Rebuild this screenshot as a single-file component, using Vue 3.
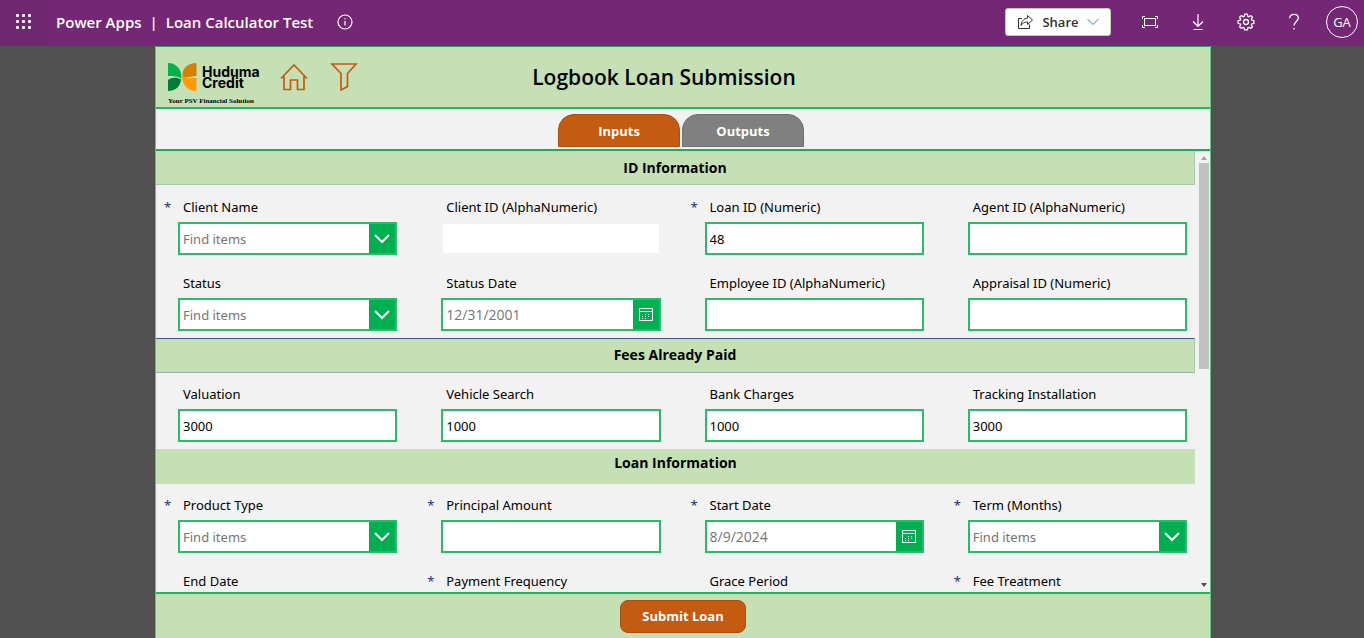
<script setup>
const tabs = [
  { name: 'Inputs', active: true },
  { name: 'Outputs', active: false },
]

const sections = [
  {
    title: 'ID Information',
    variant: 'first',
    fields: [
      { id: 'client-name', label: 'Client Name', type: 'combo', required: true },
      { id: 'client-id', label: 'Client ID (AlphaNumeric)', type: 'view' },
      { id: 'loan-id', label: 'Loan ID (Numeric)', type: 'text', value: '48', required: true },
      { id: 'agent-id', label: 'Agent ID (AlphaNumeric)', type: 'text' },
      { id: 'status', label: 'Status', type: 'combo' },
      { id: 'status-date', label: 'Status Date', type: 'date', value: '12/31/2001' },
      { id: 'employee-id', label: 'Employee ID (AlphaNumeric)', type: 'text' },
      { id: 'appraisal-id', label: 'Appraisal ID (Numeric)', type: 'text' },
    ],
  },
  {
    title: 'Fees Already Paid',
    variant: 'ruled',
    fields: [
      { id: 'valuation', label: 'Valuation', type: 'text', value: '3000' },
      { id: 'vehicle-search', label: 'Vehicle Search', type: 'text', value: '1000' },
      { id: 'bank-charges', label: 'Bank Charges', type: 'text', value: '1000' },
      { id: 'tracking', label: 'Tracking Installation', type: 'text', value: '3000' },
    ],
  },
  {
    title: 'Loan Information',
    variant: 'plain',
    fields: [
      { id: 'product-type', label: 'Product Type', type: 'combo', required: true },
      { id: 'principal', label: 'Principal Amount', type: 'text', required: true },
      { id: 'start-date', label: 'Start Date', type: 'date', value: '8/9/2024', required: true },
      { id: 'term', label: 'Term (Months)', type: 'combo', required: true },
      { id: 'end-date', label: 'End Date', type: 'view' },
      { id: 'frequency', label: 'Payment Frequency', type: 'combo', required: true },
      { id: 'grace', label: 'Grace Period', type: 'text' },
      { id: 'fee-treatment', label: 'Fee Treatment', type: 'combo', required: true },
    ],
  },
]
</script>

<template>
  <div class="shell">
    <header class="topbar">
      <button class="icon-btn waffle" aria-label="App launcher">
        <svg width="16" height="16" viewBox="0 0 16 16" fill="#fff">
          <template v-for="y in 3" :key="y">
            <rect v-for="x in 3" :key="x" :x="(x - 1) * 6" :y="(y - 1) * 6" width="3" height="3" rx="1" />
          </template>
        </svg>
      </button>
      <div class="crumbs">
        <span>Power Apps</span><span>|</span><span>Loan Calculator Test</span>
      </div>
      <button class="icon-btn info" aria-label="Information">
        <svg width="16" height="16" viewBox="0 0 16 16" fill="none" stroke="#fff">
          <circle cx="8" cy="8" r="7" stroke-width="1.2" />
          <path d="M8 7v4.5M8 4.2v1.3" stroke-width="1.2" />
        </svg>
      </button>
      <div class="tools">
        <button class="share">
          <svg width="17" height="16" viewBox="0 0 17 16" fill="none" stroke="#333" stroke-width="1">
            <path d="M5 4.500H1.500V14.500H12.500V10.500" />
            <path d="M10.500 1.500L15.500 6L10.500 10.500V8C7.500 8 5.500 9 4 11.500C4.500 7.500 6.500 4.500 10.500 4.200Z" />
          </svg>
          <span>Share</span>
          <svg width="12" height="8" viewBox="0 0 12 8" fill="none" stroke="#3d7f96" stroke-width="1">
            <path d="M.5 1L6 6.500L11.500 1" />
          </svg>
        </button>
        <button class="icon-btn tool" aria-label="Fit to screen">
          <svg width="18" height="14" viewBox="0 0 18 14" fill="none" stroke="#fff">
            <rect x="3.500" y="3.500" width="11" height="7" />
            <path d="M1.500 4V1.500H4M14 1.500H16.500V4M16.500 10V12.500H14M4 12.500H1.500V10" />
          </svg>
        </button>
        <button class="icon-btn tool" aria-label="Download">
          <svg width="14" height="18" viewBox="0 0 14 18" fill="none" stroke="#fff" stroke-width="1.200">
            <path d="M7 1V13M2 8.500L7 13.300L12 8.500M2.500 16.500H11.500" />
          </svg>
        </button>
        <button class="icon-btn tool" aria-label="Settings">
          <svg width="18" height="18" viewBox="0 0 18 18" fill="none" stroke="#fff" stroke-width="1.300" stroke-linejoin="round">
            <path d="M7.600 1.200H10.400L10.800 3.300L12 3.800L13.800 2.600L15.500 4.300L14.300 6.100L14.800 7.200L16.900 7.600V10.400L14.800 10.800L14.300 12L15.500 13.700L13.800 15.400L12 14.300L10.800 14.800L10.400 16.900H7.600L7.200 14.800L6 14.300L4.300 15.400L2.600 13.700L3.700 12L3.200 10.800L1.100 10.400V7.600L3.200 7.200L3.700 6.100L2.600 4.300L4.300 2.600L6 3.800L7.200 3.300Z" />
            <circle cx="9" cy="9" r="2.500" />
          </svg>
        </button>
        <button class="icon-btn tool" aria-label="Help">
          <svg width="12" height="18" viewBox="0 0 12 18" fill="none" stroke="#fff" stroke-width="1.300">
            <path d="M1.800 5.200C1.800 2.700 3.600 1.300 6 1.300S10.300 2.800 10.300 5C10.300 8.300 6 8.600 6 12.600M6 15V16.600" />
          </svg>
        </button>
        <button class="avatar">GA</button>
      </div>
    </header>

    <main class="stage">
      <div class="app">
        <header class="app-head">
          <div class="app-nav">
            <div class="brand">
              <div class="brand-row">
                <svg width="29" height="28" viewBox="0 0 29 28">
                  <path d="M0 0C8 0 14 6 13.500 15.500C10 13 5 13.500 0 13Z" fill="#06b24c" />
                  <path d="M0 28V17C3 14.500 9 14 13 16.500C12.500 23 8 28 0 28Z" fill="#067a3b" />
                  <path d="M28.500 0V13C24 13 20 14 17 15C15 14 14.500 12.500 14.500 11C15 5 20 0 28.500 0Z" fill="#d68002" />
                  <path d="M28.500 28C20 28 13.500 22 14.200 11.500C16 16.500 22 15 28.500 15Z" fill="#ff9908" />
                </svg>
                <div class="brand-name"><span>Huduma</span><span>Credit</span></div>
              </div>
              <div class="tagline">Your PSV Financial Solution</div>
            </div>
            <button class="icon-btn" aria-label="Home">
              <svg width="28" height="28" viewBox="0 0 28 28" fill="none" stroke="#c55a11" stroke-width="1.700">
                <path d="M1 15.500L14 2L27 15.500M4 13V26.500H10.500V17H17.500V26.500H24V13" />
              </svg>
            </button>
            <button class="icon-btn filter" aria-label="Filter">
              <svg width="28" height="28" viewBox="0 0 28 28" fill="none" stroke="#c55a11" stroke-width="1.700">
                <path d="M2 1H26L17.500 10.500V23.500L11 27V10.500Z" />
              </svg>
            </button>
          </div>
          <h1>Logbook Loan Submission</h1>
        </header>

        <nav class="tabs">
          <button v-for="t in tabs" :key="t.name" class="tab" :class="{ active: t.active }">{{ t.name }}</button>
        </nav>

        <div class="body">
          <form id="loan-form" class="form" @submit.prevent>
            <section v-for="s in sections" :key="s.title" :class="s.variant">
              <h2>{{ s.title }}</h2>
              <div class="fields">
                <div v-for="f in s.fields" :key="f.id" class="field">
                  <span class="star">{{ f.required ? '*' : '' }}</span>
                  <label :for="f.id">{{ f.label }}</label>
                  <div class="box" :class="f.type">
                    <select v-if="f.type === 'combo'" :id="f.id"><option>Find items</option></select>
                    <input v-else :id="f.id" type="text" :value="f.value" :readonly="f.type === 'view'" />
                    <span v-if="f.type === 'combo'" class="end">
                      <svg width="18" height="12" viewBox="0 0 18 12" fill="none" stroke="#fff" stroke-width="2">
                        <path d="M2 2L9 9L16 2" />
                      </svg>
                    </span>
                    <button v-if="f.type === 'date'" type="button" class="end" aria-label="Open calendar">
                      <svg width="14" height="13" viewBox="0 0 14 13" fill="none" stroke="#fff">
                        <path d="M.5 .5H13.500V12.500H.5ZM.5 3.500H13.500" />
                        <path d="M6 6.500H12M3 8.500H12M3 10.500H9" stroke-dasharray="1 2" />
                      </svg>
                    </button>
                  </div>
                </div>
              </div>
            </section>
          </form>
          <div class="scroll" aria-hidden="true">
            <svg width="6" height="4" viewBox="0 0 6 4" fill="#a3a3a3"><path d="M3 0L6 4H0Z" /></svg>
            <div class="track"><div class="thumb"></div></div>
            <svg width="6" height="4" viewBox="0 0 6 4" fill="#505050"><path d="M3 4L6 0H0Z" /></svg>
          </div>
        </div>

        <footer class="app-foot">
          <button type="submit" form="loan-form" class="submit">Submit Loan</button>
        </footer>
      </div>
    </main>
  </div>
</template>

<style>
body {
  margin: 0;
  background: #505050;
}
</style>

<style scoped>
.shell {
  display: flex;
  flex-direction: column;
  height: 100vh;
  font-family: "Open Sans", "Noto Sans", sans-serif;
  color: #000;
}
.shell * {
  box-sizing: border-box;
}
button,
input,
select {
  font: inherit;
  margin: 0;
  padding: 0;
  border: 0;
}
svg {
  display: block;
  flex: none;
}
.icon-btn {
  display: flex;
  align-items: center;
  justify-content: center;
  background: none;
}

/* Top bar */
.topbar {
  display: flex;
  flex: none;
  align-items: center;
  height: 46px;
  padding-bottom: 2px;
  background: #742774;
  color: #fff;
}
.waffle {
  width: 48px;
  height: 46px;
  background: #6f276f;
}
.crumbs {
  display: flex;
  gap: 8px;
  margin-left: 8px;
  font-size: 15px;
  font-weight: 600;
  white-space: nowrap;
}
.info {
  margin-left: 24px;
}
.tools {
  display: flex;
  align-items: center;
  margin-left: auto;
  padding-right: 6px;
}
.share {
  display: flex;
  align-items: center;
  justify-content: center;
  gap: 8px;
  width: 106px;
  height: 28px;
  margin-right: 15px;
  border: 1px solid #c8c6c4;
  border-radius: 3px;
  background: #fff;
  color: #323130;
  font-size: 13px;
  font-weight: 600;
}
.tool {
  width: 48px;
  height: 44px;
}
.avatar {
  width: 32px;
  height: 32px;
  margin-left: 8px;
  border: 1px solid #fff;
  border-radius: 50%;
  background: none;
  color: #fff;
  font-size: 13px;
}

/* App frame */
.stage {
  display: flex;
  flex: 1;
  justify-content: center;
  min-height: 0;
  padding-left: 2px;
  background: #505050;
}
.app {
  display: flex;
  flex-direction: column;
  width: 100%;
  max-width: 1056px;
  border: solid #5cc586;
  border-width: 0 1px;
  background: #f2f2f2;
}
.app-head {
  display: grid;
  flex: none;
  grid-template-columns: 202px 1fr 240px;
  align-items: center;
  height: 63px;
  border-top: 1px solid #1fae57;
  border-bottom: 2px solid #1fb65c;
  background: #c5e0b4;
}
.app-nav {
  display: flex;
  align-items: center;
  padding-left: 12px;
}
.brand {
  width: 113px;
  padding-top: 14px;
}
.brand-row {
  display: flex;
  align-items: center;
  gap: 5px;
}
.brand-name {
  display: flex;
  flex-direction: column;
  font-family: Inter, sans-serif;
  font-size: 14px;
  font-weight: 700;
  line-height: 11px;
}
.tagline {
  padding-top: 5px;
  font-family: "Liberation Serif", serif;
  font-size: 7px;
  font-weight: 700;
  line-height: 10px;
  white-space: nowrap;
}
.filter {
  margin-left: 22px;
}
h1 {
  margin: 0;
  font-size: 21px;
  font-weight: 600;
  line-height: 28px;
  text-align: center;
  white-space: nowrap;
}
.tabs {
  display: flex;
  flex: none;
  align-items: flex-end;
  justify-content: center;
  gap: 2px;
  height: 42px;
  padding: 0 4px 2px 0;
  border-bottom: 2px solid #0fb457;
}
.tab {
  width: 122px;
  height: 33px;
  border: 1px solid #6e6e6e;
  border-radius: 16px 16px 0 0;
  background: #808080;
  color: #fff;
  font-size: 13px;
  font-weight: 700;
}
.tab.active {
  border-color: #ab4e0f;
  background: #c55a11;
}

/* Form */
.body {
  display: flex;
  flex: 1;
  min-height: 0;
}
.form {
  flex: 1;
  overflow: hidden;
}
h2 {
  height: 35px;
  margin: 0;
  border-right: 1px solid #a8c8a9;
  border-bottom: 1px solid #a9c6a8;
  background: #c5e0b4;
  font-size: 14px;
  font-weight: 700;
  line-height: 33px;
  text-align: center;
}
.first h2 {
  height: 34px;
}
.ruled h2 {
  border-top: 1px solid #3f5687;
  border-bottom-color: #9db0b0;
  line-height: 32px;
}
.plain h2 {
  border: 0;
  line-height: 28px;
}
.fields {
  display: grid;
  grid-template-columns: repeat(4, 1fr);
  gap: 18px 30px;
  padding: 11px 8px 7px;
}
.first .fields {
  padding-top: 12px;
}
.field {
  display: grid;
  grid-template-columns: 14px 1fr;
  row-gap: 5px;
  font-family: "Noto Sans", "Open Sans", sans-serif;
  font-size: 13px;
  line-height: 20px;
}
.star {
  color: #1f2f78;
}
label {
  padding-left: 5px;
  white-space: nowrap;
}
.box {
  display: flex;
  grid-column: 2;
  height: 33px;
  border: 2px solid #27bd68;
  background: #fff;
}
.box.view {
  border-color: #f2f2f2;
}
.box input,
.box select {
  flex: 1;
  min-width: 0;
  padding: 0 3px;
  background: none;
  color: #000;
  outline: 0;
}
.box select {
  appearance: none;
  color: #757575;
}
.box.date input {
  color: #757575;
  font-family: "Open Sans", "Noto Sans", sans-serif;
  font-size: 14px;
}
.end {
  display: flex;
  align-items: center;
  justify-content: center;
  width: 26px;
  background: #00b050;
}

/* Scroll gutter */
.scroll {
  display: flex;
  flex: none;
  flex-direction: column;
  align-items: center;
  width: 15px;
  padding: 5px 1px 5px 4px;
}
.track {
  flex: 1;
  width: 10px;
  padding: 3px 0;
}
.thumb {
  height: 49.5%;
  background: #c1c1c1;
}

.app-foot {
  display: flex;
  flex: none;
  align-items: center;
  justify-content: center;
  height: 46px;
  border-top: 2px solid #1fb65c;
  background: #c5e0b4;
}
.submit {
  width: 126px;
  height: 33px;
  border: 1px solid #ab4e0f;
  border-radius: 8px;
  background: #c55a11;
  color: #fff;
  font-size: 13px;
  font-weight: 700;
}
</style>
